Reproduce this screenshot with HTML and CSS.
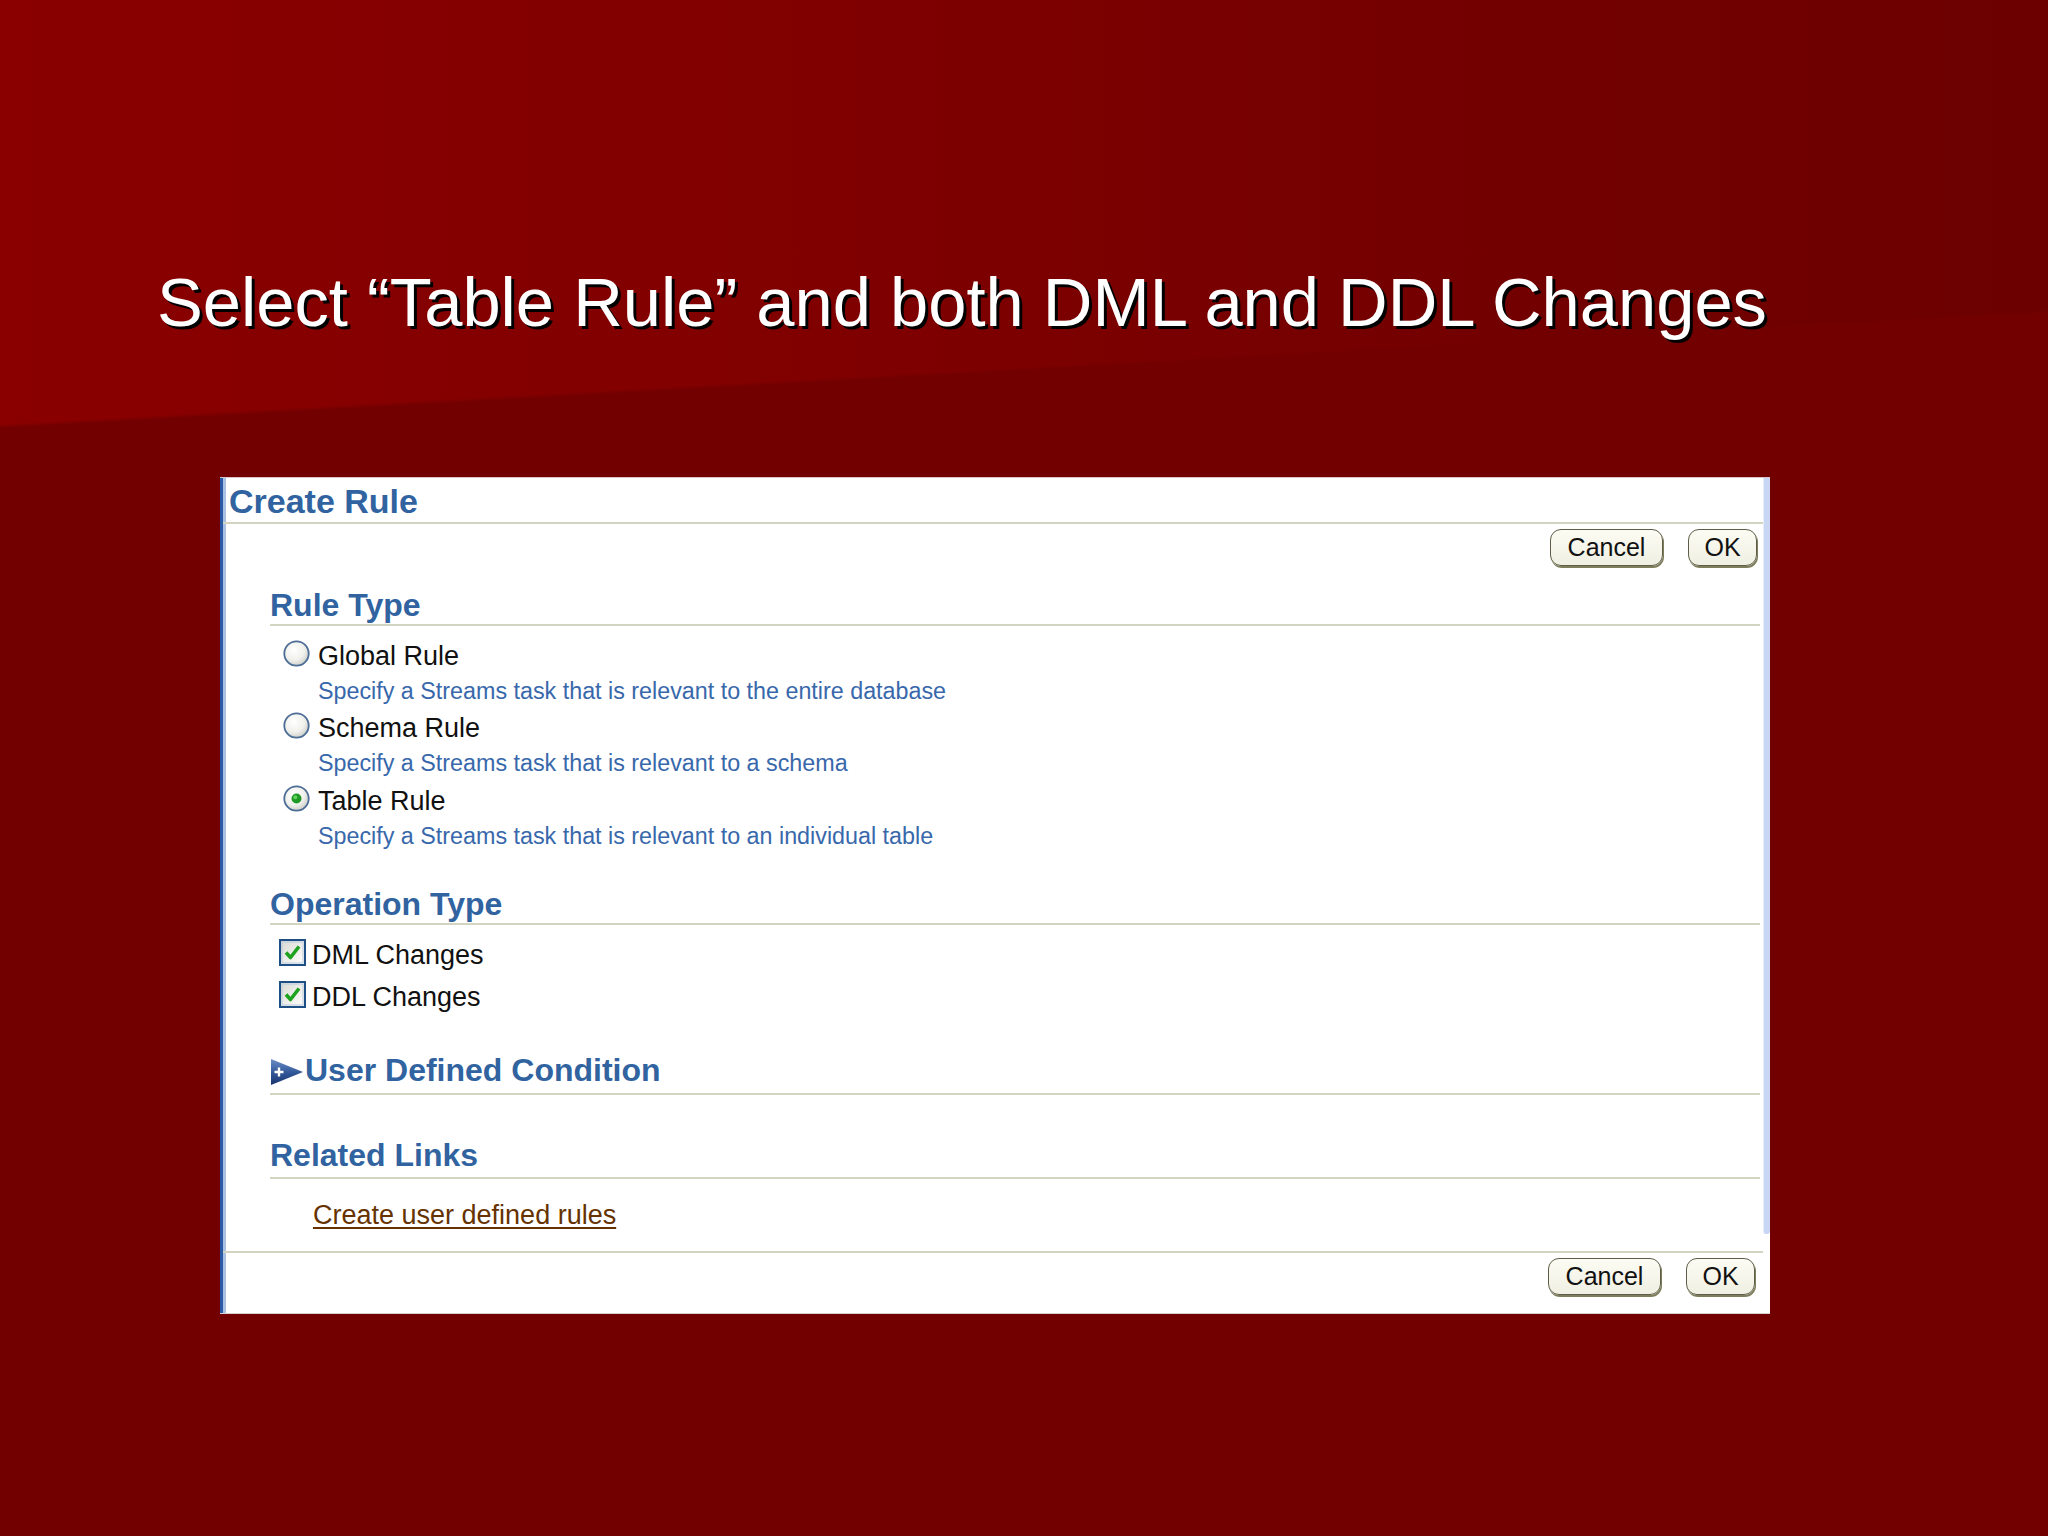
FILE: index.html
```html
<!DOCTYPE html>
<html lang="en">
<head>
<meta charset="utf-8">
<title>Select Table Rule</title>
<link rel="stylesheet" href="styles.css">
</head>
<body>
<div class="slide">
  <h1 class="title">Select “Table Rule” and both DML and DDL Changes</h1>

  <div class="panel">
    <div class="panel-main">
      <div class="panel-header">Create Rule</div>

      <div class="btn-row btn-row-top">
        <button class="btn btn-cancel">Cancel</button>
        <button class="btn btn-ok">OK</button>
      </div>

      <div class="section sec-rule">
        <h2 class="sec-head">Rule Type</h2>
        <div class="options">
          <div class="opt">
            <div class="opt-line">
              <svg class="radio" width="27" height="27" viewBox="0 0 27 27">
                <defs>
                  <radialGradient id="rg1" cx="40%" cy="35%" r="70%">
                    <stop offset="0" stop-color="#ffffff"/>
                    <stop offset="0.6" stop-color="#f0f0ec"/>
                    <stop offset="1" stop-color="#c9cbc4"/>
                  </radialGradient>
                </defs>
                <circle cx="13.5" cy="13.5" r="12.2" fill="url(#rg1)" stroke="#4b6d96" stroke-width="1.8"/>
              </svg>
              <span class="opt-label">Global Rule</span>
            </div>
            <div class="opt-desc">Specify a Streams task that is relevant to the entire database</div>
          </div>
          <div class="opt">
            <div class="opt-line">
              <svg class="radio" width="27" height="27" viewBox="0 0 27 27">
                <circle cx="13.5" cy="13.5" r="12.2" fill="url(#rg1)" stroke="#4b6d96" stroke-width="1.8"/>
              </svg>
              <span class="opt-label">Schema Rule</span>
            </div>
            <div class="opt-desc">Specify a Streams task that is relevant to a schema</div>
          </div>
          <div class="opt">
            <div class="opt-line">
              <svg class="radio" width="27" height="27" viewBox="0 0 27 27">
                <circle cx="13.5" cy="13.5" r="12.2" fill="url(#rg1)" stroke="#4b6d96" stroke-width="1.8"/>
                <circle cx="13.5" cy="13.5" r="5" fill="#1f9a25"/>
                <circle cx="12.3" cy="12.2" r="2" fill="#5fd35f"/>
              </svg>
              <span class="opt-label">Table Rule</span>
            </div>
            <div class="opt-desc">Specify a Streams task that is relevant to an individual table</div>
          </div>
        </div>
      </div>

      <div class="section sec-op">
        <h2 class="sec-head">Operation Type</h2>
        <div class="checks">
          <div class="check-line">
            <svg class="checkbox" width="27" height="27" viewBox="0 0 27 27">
              <defs>
                <linearGradient id="cg" x1="0" y1="0" x2="1" y2="1">
                  <stop offset="0" stop-color="#d9d9d2"/>
                  <stop offset="1" stop-color="#ffffff"/>
                </linearGradient>
              </defs>
              <rect x="1" y="1" width="25" height="25" fill="url(#cg)" stroke="#1d4f84" stroke-width="2"/>
              <rect x="3" y="3" width="21" height="21" fill="none" stroke="#b9c9de" stroke-width="1"/>
              <path d="M7 13.5 L11.5 18.5 L20 7.5" fill="none" stroke="#1ea31e" stroke-width="3.6" stroke-linejoin="round"/>
            </svg>
            <span class="opt-label">DML Changes</span>
          </div>
          <div class="check-line">
            <svg class="checkbox" width="27" height="27" viewBox="0 0 27 27">
              <rect x="1" y="1" width="25" height="25" fill="url(#cg)" stroke="#1d4f84" stroke-width="2"/>
              <rect x="3" y="3" width="21" height="21" fill="none" stroke="#b9c9de" stroke-width="1"/>
              <path d="M7 13.5 L11.5 18.5 L20 7.5" fill="none" stroke="#1ea31e" stroke-width="3.6" stroke-linejoin="round"/>
            </svg>
            <span class="opt-label">DDL Changes</span>
          </div>
        </div>
      </div>

      <div class="section sec-udc">
        <h2 class="sec-head udc-head">
          <svg class="disclose" width="32" height="26" viewBox="0 0 32 26">
            <defs>
              <linearGradient id="tg" x1="0" y1="0" x2="0" y2="1">
                <stop offset="0" stop-color="#6d8fc9"/>
                <stop offset="0.55" stop-color="#2f5596"/>
                <stop offset="1" stop-color="#1a3470"/>
              </linearGradient>
            </defs>
            <polygon points="0,0 32,13 0,26" fill="url(#tg)"/>
            <path d="M3.5 13 H12.5 M8 8.5 V17.5" stroke="#ffffff" stroke-width="2.4"/>
          </svg>
          <span>User Defined Condition</span>
        </h2>
      </div>

      <div class="section sec-links">
        <h2 class="sec-head">Related Links</h2>
        <a class="rel-link" href="#">Create user defined rules</a>
      </div>

      <div class="btn-row btn-row-bottom">
        <button class="btn btn-cancel">Cancel</button>
        <button class="btn btn-ok">OK</button>
      </div>
    </div>
    <div class="panel-side">
      <div class="scroll-strip"></div>
    </div>
  </div>
</div>
</body>
</html>
```
FILE: styles.css
```css
html, body {
  margin: 0;
  padding: 0;
  width: 2048px;
  height: 1536px;
  overflow: hidden;
}

body {
  background:
    linear-gradient(176.8deg, rgba(114,0,0,0) 0%, rgba(114,0,0,0) 25.7%, #720000 25.95%, #720000 100%),
    linear-gradient(90deg, #8a0000 0%, #800000 40%, #740000 70%, #6c0000 100%);
  font-family: "Liberation Sans", Arial, sans-serif;
}

.slide {
  display: flex;
  flex-direction: column;
  padding-top: 269px;
}

.title {
  margin: 0 0 0 157px;
  font-family: "Liberation Sans", Arial, sans-serif;
  font-weight: normal;
  font-size: 68.7px;
  line-height: 68px;
  color: #ffffff;
  white-space: nowrap;
  text-shadow: 3px 3px 0 #000000;
}

.panel {
  margin: 140px 0 0 220px;
  width: 1550px;
  display: flex;
  background: #ffffff;
  border-top: 1px solid #d9c3c8;
  border-bottom: 1px solid #d8d0d0;
  box-sizing: border-box;
}

.panel-main {
  flex: 1;
  display: flex;
  flex-direction: column;
  border-left: 3px solid #2c5ba6;
  box-shadow: inset 3px 0 0 #a9c1e4;
  min-width: 0;
}

.panel-header {
  padding: 3px 0 0 6px;
  line-height: 41px;
  height: 41px;
  font-size: 34px;
  font-weight: bold;
  color: #30639f;
  border-bottom: 2px solid #d3d5c1;
}

.btn-row {
  display: flex;
  justify-content: flex-end;
  gap: 25px;
}

.btn-row-top {
  margin-top: 5px;
  padding-right: 6px;
}

.btn-row-bottom {
  margin-top: 18.4px;
  border-top: 2px solid #d3d5c1;
  padding: 5px 8px 18px 0;
}

.btn {
  height: 37px;
  padding: 0;
  margin: 0;
  box-sizing: border-box;
  font-family: "Liberation Sans", Arial, sans-serif;
  font-size: 25px;
  line-height: 33px;
  color: #111111;
  background: linear-gradient(#fcfcf4, #efefe2);
  border: 1.5px solid #5d5d48;
  border-radius: 11px;
  box-shadow: 1px 2px 0 #7e7e5c;
}

.btn-cancel {
  width: 113px;
}

.btn-ok {
  width: 69px;
}

.section {
  margin: 0 3px 0 47px;
}

.sec-head {
  margin: 0;
  font-size: 32px;
  font-weight: bold;
  line-height: 38px;
  color: #30639f;
  border-bottom: 2px solid #d3d5c1;
}

.sec-rule {
  margin-top: 20px;
}

.options {
  margin-top: 11.6px;
}

.opt {
  margin-bottom: 2.5px;
}

.opt-line {
  display: flex;
  align-items: flex-start;
  padding-left: 13px;
  gap: 8px;
}

.radio {
  margin-top: 2px;
  flex: none;
}

.opt-label {
  font-size: 27px;
  line-height: 36px;
  color: #111111;
}

.opt-desc {
  padding-left: 48px;
  font-size: 23.3px;
  line-height: 34px;
  color: #3868ab;
}

.sec-op {
  margin-top: 30.3px;
}

.checks {
  margin-top: 8.6px;
}

.check-line {
  display: flex;
  align-items: flex-start;
  padding-left: 9px;
  gap: 6px;
}

.check-line .opt-label {
  line-height: 42px;
}

.checkbox {
  margin-top: 5.4px;
  flex: none;
}

.sec-udc {
  margin-top: 33.3px;
}

.udc-head {
  display: flex;
  align-items: flex-start;
  gap: 2px;
  padding-left: 1px;
  padding-bottom: 4px;
}

.disclose {
  margin-top: 8px;
  flex: none;
}

.sec-links {
  margin-top: 41px;
}

.sec-links .sec-head {
  padding-bottom: 3px;
}

.rel-link {
  display: block;
  margin-top: 17.5px;
  padding-left: 43px;
  font-size: 27px;
  line-height: 36px;
  color: #663300;
  text-decoration: underline;
  text-underline-offset: 3px;
}

.panel-side {
  width: 7px;
  flex: none;
  background: #ffffff;
}

.scroll-strip {
  height: 756px;
  background: #c8d6f4;
  border-left: 1px solid #e6ecfa;
  box-sizing: border-box;
  border-radius: 0 0 3px 3px;
}
```
